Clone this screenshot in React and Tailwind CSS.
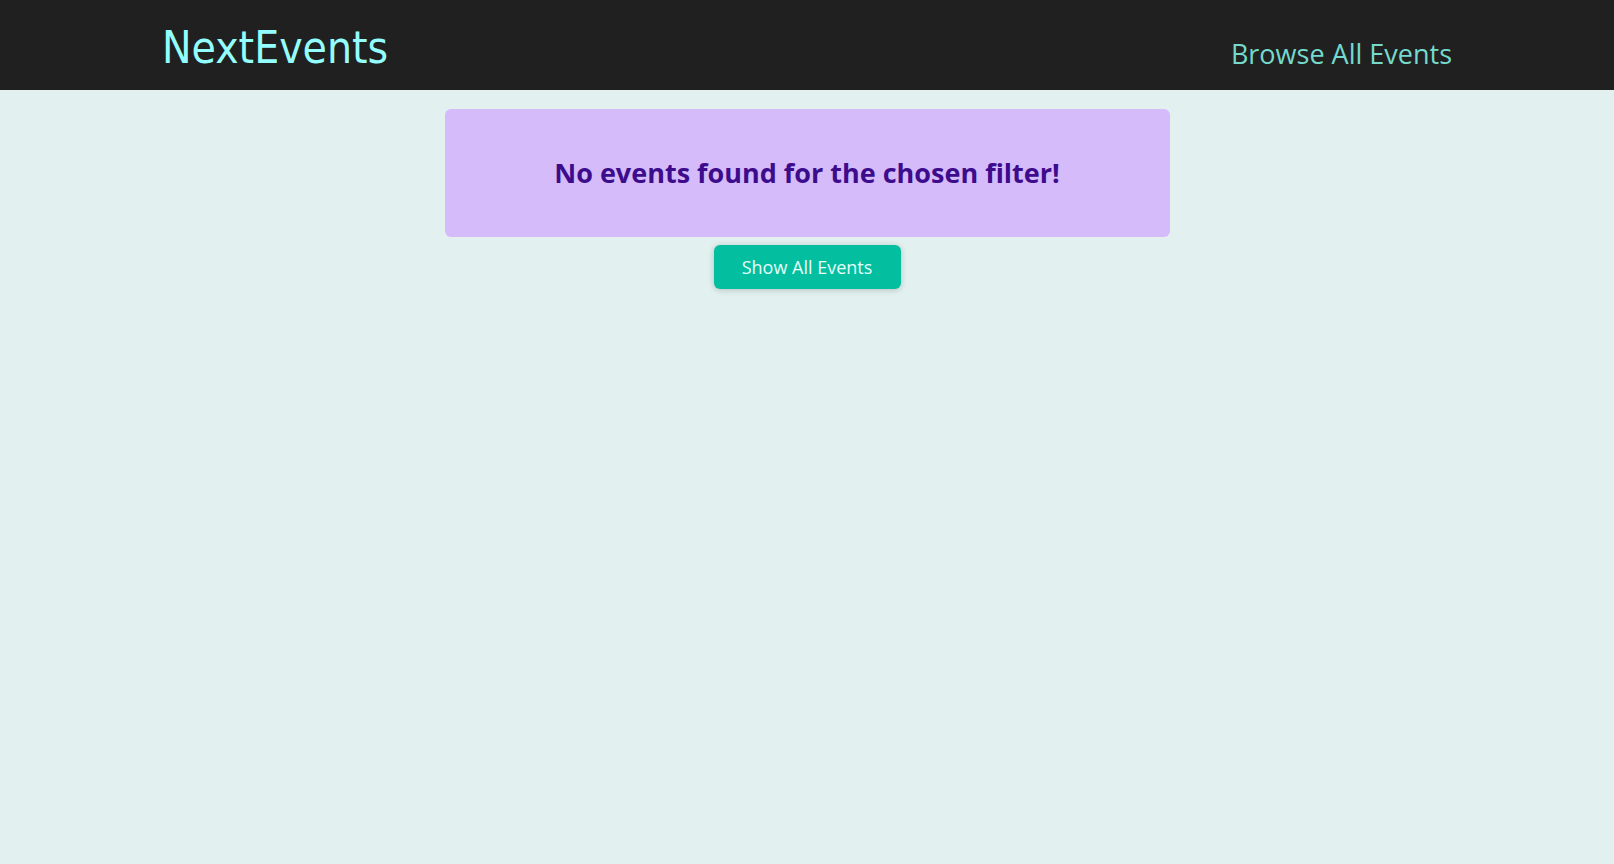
import React from 'react';

const Header = () => (
  <header className="flex h-[90px] items-center justify-between bg-[#202020] px-[162px]">
    <a
      href="#"
      className="mt-[6px] text-[44px] leading-none text-[#94fdfd] font-stretch-condensed"
      style={{ fontFamily: '"DejaVu Sans Condensed", "DejaVu Sans", sans-serif' }}
    >
      NextEvents
    </a>
    <nav className="mt-[18px]">
      <a href="#" className="text-[27px] text-[#74dacc]">
        Browse All Events
      </a>
    </nav>
  </header>
);

export default function App() {
  return (
    <div
      className="min-h-[864px] bg-[#e2f0f0]"
      style={{ fontFamily: '"Open Sans", sans-serif' }}
    >
      <Header />
      <main className="flex flex-col items-center pt-[19px]">
        <div className="flex h-[128px] w-[725px] items-center justify-center rounded-md bg-[#d6bbfa]">
          <p className="text-[27px] font-bold text-[#3c0c8c]">
            No events found for the chosen filter!
          </p>
        </div>
        <button className="mt-[8px] h-[44px] w-[187px] rounded-md bg-[#03be9f] text-[18px] text-[#e6fffa] shadow-[0_1px_6px_rgba(0,0,0,0.2)]">
          Show All Events
        </button>
      </main>
    </div>
  );
}
